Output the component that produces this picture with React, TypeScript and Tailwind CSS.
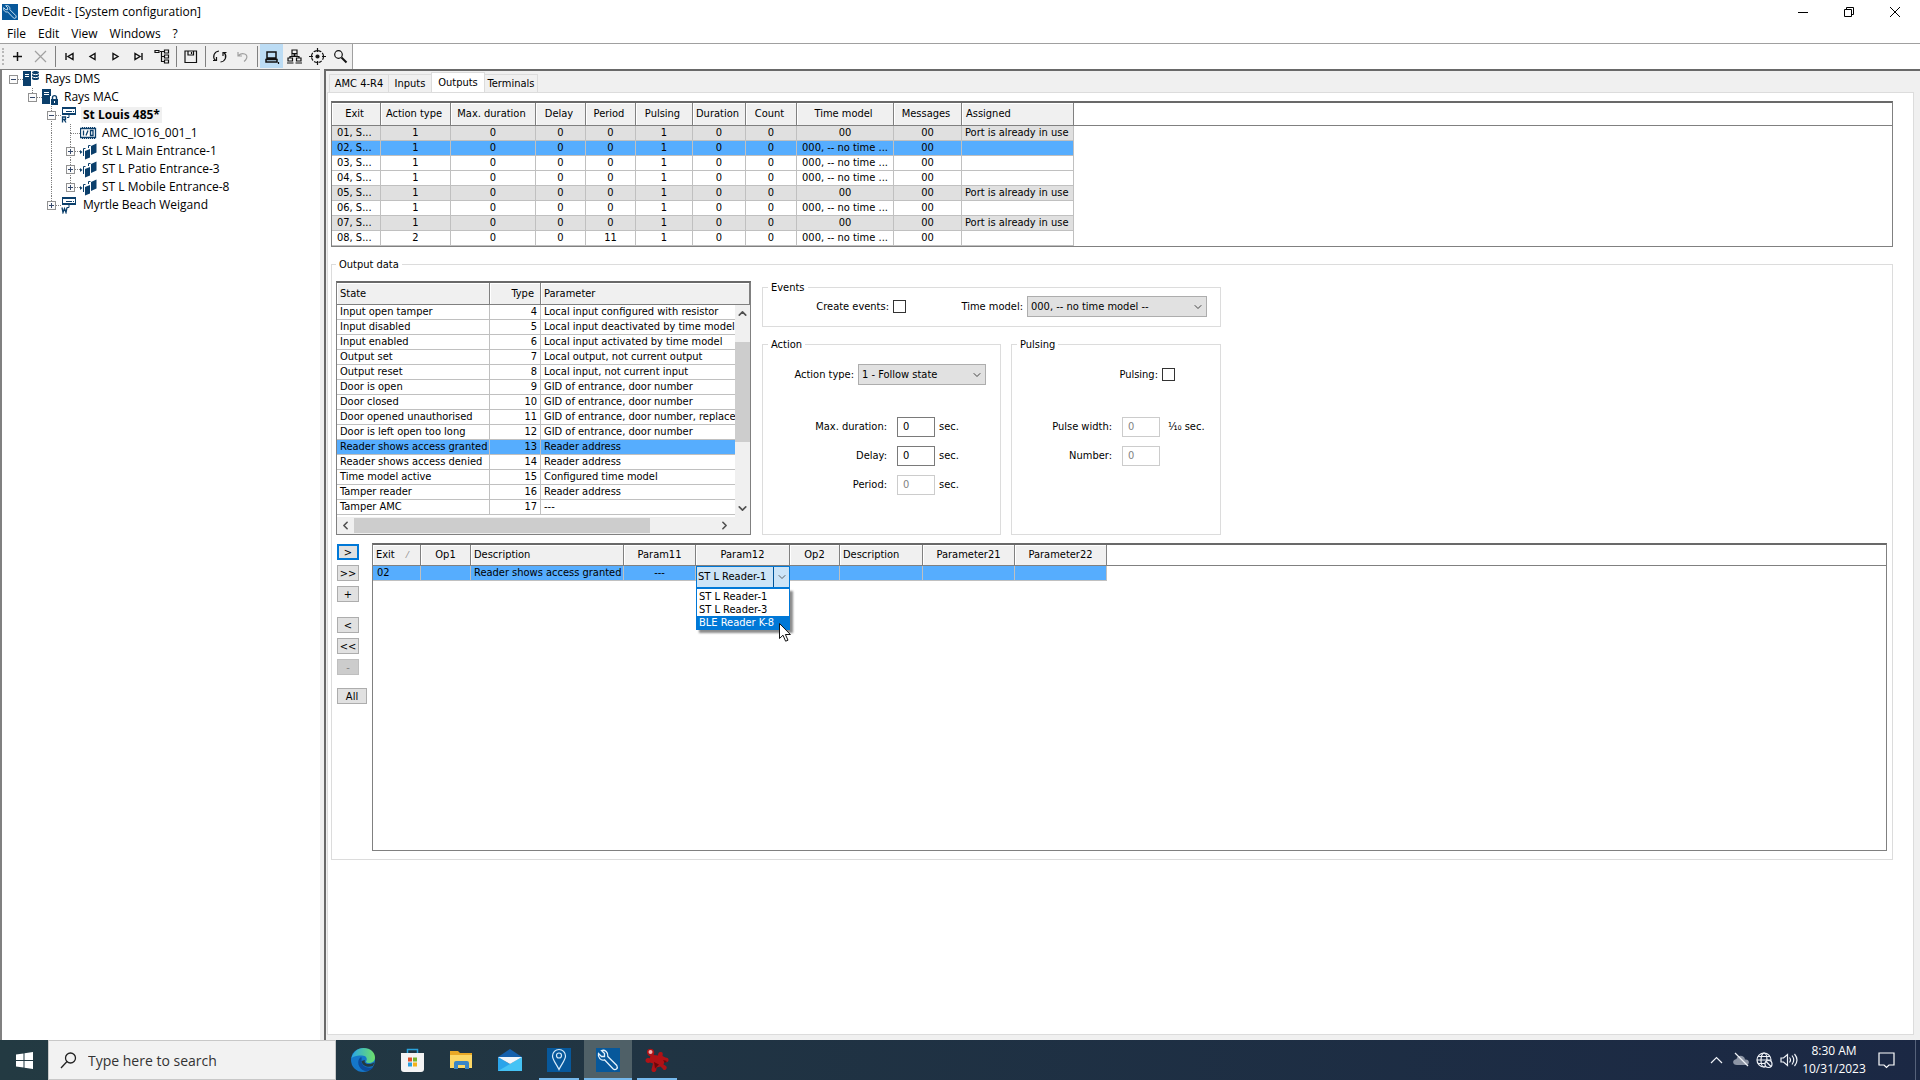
import type { ReactNode } from 'react';
import { ChevronDown, ChevronLeft, ChevronRight, ChevronUp } from 'lucide-react';

const outputRows = [
  { exit: '01, S...', action: '1', period: '0', model: '00', assigned: 'Port is already in use' },
  { exit: '02, S...', action: '1', period: '0', model: '000, -- no time ...', assigned: '', selected: true },
  { exit: '03, S...', action: '1', period: '0', model: '000, -- no time ...', assigned: '' },
  { exit: '04, S...', action: '1', period: '0', model: '000, -- no time ...', assigned: '' },
  { exit: '05, S...', action: '1', period: '0', model: '00', assigned: 'Port is already in use' },
  { exit: '06, S...', action: '1', period: '0', model: '000, -- no time ...', assigned: '' },
  { exit: '07, S...', action: '1', period: '0', model: '00', assigned: 'Port is already in use' },
  { exit: '08, S...', action: '2', period: '11', model: '000, -- no time ...', assigned: '' },
];

const outputColumns = [
  { label: 'Exit', width: 'w-[49px]' },
  { label: 'Action type', width: 'w-[70px]' },
  { label: 'Max. duration', width: 'w-[85px]' },
  { label: 'Delay', width: 'w-[50px]' },
  { label: 'Period', width: 'w-[50px]' },
  { label: 'Pulsing', width: 'w-[57px]' },
  { label: 'Duration', width: 'w-[53px]' },
  { label: 'Count', width: 'w-[51px]' },
  { label: 'Time model', width: 'w-[97px]' },
  { label: 'Messages', width: 'w-[68px]' },
  { label: 'Assigned', width: 'w-[112px]' },
];

const states = [
  ['Input open tamper', '4', 'Local input configured with resistor'],
  ['Input disabled', '5', 'Local input deactivated by time model'],
  ['Input enabled', '6', 'Local input activated by time model'],
  ['Output set', '7', 'Local output, not current output'],
  ['Output reset', '8', 'Local input, not current input'],
  ['Door is open', '9', 'GID of entrance, door number'],
  ['Door closed', '10', 'GID of entrance, door number'],
  ['Door opened unauthorised', '11', 'GID of entrance, door number, replace'],
  ['Door is left open too long', '12', 'GID of entrance, door number'],
  ['Reader shows access granted', '13', 'Reader address'],
  ['Reader shows access denied', '14', 'Reader address'],
  ['Time model active', '15', 'Configured time model'],
  ['Tamper reader', '16', 'Reader address'],
  ['Tamper AMC', '17', '---'],
];

const ruleColumns = [
  { label: 'Exit', width: 'w-[48px]' },
  { label: 'Op1', width: 'w-[50px]' },
  { label: 'Description', width: 'w-[153px]' },
  { label: 'Param11', width: 'w-[72px]' },
  { label: 'Param12', width: 'w-[94px]' },
  { label: 'Op2', width: 'w-[50px]' },
  { label: 'Description', width: 'w-[83px]' },
  { label: 'Parameter21', width: 'w-[92px]' },
  { label: 'Parameter22', width: 'w-[92px]' },
];

// connector cells: '' blank, 'v' vertical, 't' branch, 'l' last branch, '-' collapsible, '+' expandable
const tree = [
  { lines: ['-'], icon: 'dms', label: 'Rays DMS' },
  { lines: ['', 'l-'], icon: 'mac', label: 'Rays MAC' },
  { lines: ['', '', 't-'], icon: 'amcR', label: 'St Louis 485*', active: true },
  { lines: ['', '', 'v', 't'], icon: 'io', label: 'AMC_IO16_001_1' },
  { lines: ['', '', 'v', 't+'], icon: 'door', label: 'St L Main Entrance-1' },
  { lines: ['', '', 'v', 't+'], icon: 'door', label: 'ST L Patio Entrance-3' },
  { lines: ['', '', 'v', 'l+'], icon: 'door', label: 'ST L Mobile Entrance-8' },
  { lines: ['', '', 'l+'], icon: 'amcW', label: 'Myrtle Beach Weigand' },
];

const headCell =
  'border-b border-r border-[#808080] bg-[#f0f0f0] p-0 font-normal whitespace-nowrap overflow-hidden shadow-[inset_1px_1px_0_#ffffff]';
const cell = 'h-[15px] border-b border-r border-[#c0c0c0] p-0 leading-[14px] whitespace-nowrap overflow-hidden';

function TreeLine({ kind }: { kind: string }) {
  const box = kind.includes('+') || kind.includes('-');
  const up = /[vtl]/.test(kind);
  const down = /[vt]/.test(kind);
  return (
    <svg width="19" height="18" className="shrink-0" fill="none" stroke="#808080" shapeRendering="crispEdges">
      {up && <path d="M9.5 0V9" strokeDasharray="1 1" />}
      {down && <path d="M9.5 9V18" strokeDasharray="1 1" />}
      {kind && kind !== 'v' && <path d="M10 9.5H19" strokeDasharray="1 1" />}
      {box && <rect x="5.5" y="5.5" width="8" height="8" fill="#fbfbfb" stroke="#919191" />}
      {box && <path d="M7 9.5H12" stroke="#34486b" />}
      {kind.includes('+') && <path d="M9.5 7V12" stroke="#34486b" />}
    </svg>
  );
}

function TreeIcon({ name }: { name: string }) {
  return (
    <svg width="17" height="18" viewBox="0 0 17 18" className="shrink-0" fill="#0b3f6b">
      {name === 'dms' && (
        <>
          <path d="M0 1h8v15H0z" />
          <path d="M2 4.5h4M2 6.5h4" stroke="#fff" />
          <path d="M9 2.5c0-2 7-2 7 0v6c0 2-7 2-7 0z" />
          <path d="M9 3.5c1 1.5 6 1.5 7 0M9 6.5c1 1.5 6 1.5 7 0" stroke="#fff" fill="none" />
        </>
      )}
      {name === 'mac' && (
        <>
          <path d="M0 1h9v15H0z" />
          <path d="M2 4.5h5M2 6.5h5" stroke="#fff" />
          <path d="M8 8h9v9H8z" fill="#fff" />
          <path d="M9 11h7v6H9z" />
          <path d="M10.5 11V9.5c0-2.5 4-2.5 4 0V11" fill="none" stroke="#0b3f6b" strokeWidth="1.4" />
          <path d="M12.5 13v2" stroke="#fff" />
        </>
      )}
      {(name === 'amcR' || name === 'amcW') && (
        <g fill="none" stroke="#0b3f6b">
          <path d="M1.5 2h13M1.5 8h13" strokeWidth="2" />
          <path d="M1.5 1v8M14.5 1v8M5 5.5h6M12 5.5h1" />
          <path d="M8 9v2.5H6" />
          {name === 'amcR' ? (
            <path d="M1.5 16.500v-5.500h3v2.500h-3M3 13.500l2 3" strokeWidth="1.3" />
          ) : (
            <path d="M1 11.500l1 5 1.500-4 1.500 4 1-5" strokeWidth="1.3" />
          )}
        </g>
      )}
      {name === 'io' && (
        <g fill="none" stroke="#0b3f6b">
          <path d="M.5 4.500h15v9H.5z" strokeWidth="1.3" />
          <path d="M2 3.500h13M2 14.500h13" strokeDasharray="1 1" />
          <path d="M3.500 6.500v5M6 11.500l2-5M10.500 6.500h2.500v5h-2.500z" strokeWidth="1.3" />
        </g>
      )}
      {name === 'door' && (
        <>
          <path d="M0 8l2.500 2L0 12z" />
          <path d="M3.500 14V6.500h2" fill="none" stroke="#0b3f6b" />
          <path d="M5 9l5-2v8.500l-5 2z" />
          <path d="M8.500 6V3.500h2" fill="none" stroke="#0b3f6b" />
          <path d="M11 4l5.500-2.500v9L11 13z" />
        </>
      )}
    </svg>
  );
}

function ToolButton({ label, children, active, dim }: { label: string; children: ReactNode; active?: boolean; dim?: boolean }) {
  return (
    <button aria-label={label} className={`flex h-6 w-[23px] items-center justify-center ${active ? 'bg-[#bcdcf4]' : ''}`}>
      <svg width="17" height="17" viewBox="0 0 17 17" fill="none" stroke={dim ? '#a0a0a0' : '#111111'} strokeWidth="1.2">
        {children}
      </svg>
    </button>
  );
}

function ToolSeparator() {
  return (
    <div className="flex w-[6px] justify-center py-[2px]">
      <div className="w-px bg-[#808080]" />
    </div>
  );
}

function Toolbar() {
  return (
    <div className="flex h-[25px] bg-white">
      <div className="flex border-r border-[#a0a0a0] bg-[#f0f0f0]">
        <div className="my-1 ml-[2px] mr-[2px] w-[2px] border-l-2 border-dotted border-[#b8b8b8]" />
        <ToolButton label="New"><path d="M8.5 4v9M4 8.5h9" strokeWidth="1.5" /></ToolButton>
        <ToolButton label="Delete" dim><path d="M3 3l11 11M14 3L3 14" /></ToolButton>
        <ToolSeparator />
        <ToolButton label="First"><path d="M5 5v7M12 5.500v6l-5-3z" strokeWidth="1.4" /></ToolButton>
        <ToolButton label="Previous"><path d="M11 5.500v6l-5-3z" strokeWidth="1.4" /></ToolButton>
        <ToolButton label="Next"><path d="M6 5.500v6l5-3z" strokeWidth="1.4" /></ToolButton>
        <ToolButton label="Last"><path d="M12 5v7M5 5.500v6l5-3z" strokeWidth="1.4" /></ToolButton>
        <ToolButton label="Tree">
          <path d="M2 2.500h4v2H2zM11.500 2h4v3h-4zM11.500 7h4v3h-4zM11.500 12h4v3h-4zM7 3.500h4M8.500 3.500v10H11M8.500 8.500H11" />
        </ToolButton>
        <ToolSeparator />
        <ToolButton label="Save"><path d="M3 3h11.500v11.500H3zM6 3v4h5.500V3M9.500 4v2" /></ToolButton>
        <ToolSeparator />
        <ToolButton label="Refresh">
          <path d="M8 3c-5 .5-7 6-3.500 9.500M2 12.500h3.500V9M9.500 14c5-.5 7-6 3.500-9.500M15.500 4.500H12V8" />
        </ToolButton>
        <ToolButton label="Undo" dim><path d="M4 4v4h4M4.500 7.500c4-4 10-1 8 3-.5 1-1 2-2.500 3" /></ToolButton>
        <ToolSeparator />
        <ToolButton label="Devices" active>
          <path d="M4 4h9v6H4zM3 11.500h11v2.500H3z" strokeWidth="1.5" />
          <path d="M15.500 14v2" />
        </ToolButton>
        <ToolButton label="Network">
          <path d="M6 2h5v3.500H6zM8.500 5.500v3M4 10V8.500h9V10M2 10h4.500v3H2zM10.500 10H15v3h-4.500zM1 15h6.500M9.500 15H16M5 7h7" />
        </ToolButton>
        <ToolButton label="Locate">
          <circle cx="8.5" cy="8.5" r="6" strokeDasharray="3.4 1.3" />
          <path d="M8.500 0v4M8.500 13v4M0 8.500h4M13 8.500h4" />
          <circle cx="8.5" cy="8.5" r="1.5" fill="#111111" />
        </ToolButton>
        <ToolButton label="Search"><circle cx="6.5" cy="6.5" r="3.8" /><path d="M9.500 9.500l5 5" strokeWidth="2" /></ToolButton>
      </div>
    </div>
  );
}

function OutputTable() {
  return (
    <div className="border border-t-2 border-[#808080] border-t-[#696969]">
      <table className="w-full table-fixed border-separate border-spacing-0">
        <thead>
          <tr>
            {outputColumns.map((c) => (
              <th key={c.label} className={`${headCell} h-[23px] ${c.width} ${c.label === 'Assigned' ? 'pl-1 text-left' : 'pr-[3px] text-center'}`}>
                {c.label}
              </th>
            ))}
            <th className="border-b border-[#808080]" />
          </tr>
        </thead>
        <tbody>
          {outputRows.map((r) => (
            <tr key={r.exit} className={r.selected ? 'bg-[#56adfe]' : r.assigned ? 'bg-[#e0e0e0]' : 'bg-white'}>
              <td className={`${cell} pl-[5px]`}>{r.exit}</td>
              {[r.action, '0', '0', r.period, '1', '0', '0', r.model, '00'].map((v, i) => (
                <td key={i} className={`${cell} text-center`}>{v}</td>
              ))}
              <td className={`${cell} pl-[3px]`}>{r.assigned}</td>
              <td className="bg-white p-0" />
            </tr>
          ))}
        </tbody>
      </table>
    </div>
  );
}

function StateTable() {
  return (
    <div className="relative flex h-[254px] w-[415px] flex-col border border-t-2 border-[#808080] border-t-[#696969]">
      <div className="min-h-0 flex-1 overflow-hidden">
        <table className="w-full table-fixed border-separate border-spacing-0">
          <thead>
            <tr>
              <th className={`${headCell} h-[22px] w-[153px] pl-[3px] text-left`}>State</th>
              <th className={`${headCell} h-[22px] w-[51px] pr-[6px] text-right`}>Type</th>
              <th className={`${headCell} h-[22px] pl-[3px] text-left`}>Parameter</th>
            </tr>
          </thead>
          <tbody>
            {states.map(([state, type, param]) => (
              <tr key={type} className={type === '13' ? 'bg-[#56adfe]' : 'bg-white'}>
                <td className={`${cell} pl-[3px]`}>{state}</td>
                <td className={`${cell} pr-[3px] text-right`}>{type}</td>
                <td className={`${cell} pl-[3px]`}>{param}</td>
              </tr>
            ))}
          </tbody>
        </table>
      </div>
      <div className="flex h-[17px] items-center bg-[#f0f0f0]">
        <button aria-label="Scroll left" className="flex w-[17px] justify-center"><ChevronLeft size={13} strokeWidth={3} color="#505050" /></button>
        <div className="h-[15px] w-[296px] bg-[#cdcdcd]" />
        <button aria-label="Scroll right" className="ml-auto mr-[17px] flex w-[17px] justify-center"><ChevronRight size={13} strokeWidth={3} color="#505050" /></button>
      </div>
      {/* vertical scrollbar lies over the clipped rows */}
      <div className="absolute bottom-[17px] right-0 top-[22px] flex w-[15px] flex-col items-center bg-[#f0f0f0]">
        <button aria-label="Scroll up" className="flex h-[17px] items-center"><ChevronUp size={13} strokeWidth={3} color="#505050" /></button>
        <div className="mt-[20px] h-[100px] w-[15px] bg-[#cdcdcd]" />
        <button aria-label="Scroll down" className="mt-auto flex h-[17px] items-center"><ChevronDown size={13} strokeWidth={3} color="#505050" /></button>
      </div>
    </div>
  );
}

function SelectBox({ id, value, width }: { id: string; value: string; width: string }) {
  return (
    <div className={`relative ${width}`}>
      <select id={id} className="h-[21px] w-full appearance-none border border-[#adadad] bg-[#e1e1e1] pl-[3px]">
        <option>{value}</option>
      </select>
      <ChevronDown size={12} strokeWidth={2} color="#444444" className="pointer-events-none absolute right-[3px] top-[5px]" />
    </div>
  );
}

function NumberField({ id, label, unit, disabled }: { id: string; label: string; unit: ReactNode; disabled?: boolean }) {
  return (
    <div className="flex h-[29px] items-center">
      <label htmlFor={id} className="flex-1 pr-[10px] text-right">{label}</label>
      <input
        id={id}
        defaultValue="0"
        disabled={disabled}
        className={`h-[20px] w-[38px] border px-[5px] ${disabled ? 'border-[#cccccc] text-[#838383]' : 'border-[#7a7a7a]'}`}
      />
      {unit}
    </div>
  );
}

const group = 'min-w-0 border border-[#dcdcdc]';
const groupTitle = 'ml-[5px] px-[3px] leading-[13px]';

function Settings() {
  const seconds = <span className="w-[65px] pl-1">sec.</span>;
  return (
    <div className="flex w-[459px] flex-col gap-[11px]">
      <fieldset className={`${group} h-[46px]`}>
        <legend className={groupTitle}>Events</legend>
        <div className="flex items-center pr-[13px] pt-[2px]">
          <label htmlFor="create" className="w-[130px] pr-1 text-right">Create events:</label>
          <input id="create" type="checkbox" className="size-[13px] appearance-none border border-[#333333]" />
          <label htmlFor="model" className="flex-1 pr-1 text-right">Time model:</label>
          <SelectBox id="model" value="000, -- no time model --" width="w-[180px]" />
        </div>
      </fieldset>
      <div className="flex gap-[10px]">
        <fieldset className={`${group} h-[197px] w-[239px]`}>
          <legend className={groupTitle}>Action</legend>
          <div className="flex items-center pr-[14px] pt-[13px]">
            <label htmlFor="action" className="flex-1 pr-1 text-right">Action type:</label>
            <SelectBox id="action" value="1 - Follow state" width="w-[128px]" />
          </div>
          <div className="pt-[27px]">
            <NumberField id="max" label="Max. duration:" unit={seconds} />
            <NumberField id="delay" label="Delay:" unit={seconds} />
            <NumberField id="period" label="Period:" unit={seconds} disabled />
          </div>
        </fieldset>
        <fieldset className={`${group} h-[197px] flex-1`}>
          <legend className={groupTitle}>Pulsing</legend>
          <div className="flex items-center justify-end gap-1 pr-[45px] pt-[13px]">
            <label htmlFor="pulsing" className="leading-[21px]">Pulsing:</label>
            <input id="pulsing" type="checkbox" className="size-[13px] appearance-none border border-[#333333]" />
          </div>
          <div className="pt-[27px]">
            <NumberField id="pulse" label="Pulse width:" disabled unit={<span className="w-[60px] pl-2">⅒ sec.</span>} />
            <NumberField id="number" label="Number:" disabled unit={<span className="w-[60px]" />} />
          </div>
        </fieldset>
      </div>
    </div>
  );
}

function MoveButton({ label, style }: { label: string; style?: string }) {
  return (
    <button className={`flex h-4 items-center justify-center border leading-none ${style ?? 'w-[22px] border-[#adadad] bg-[#e1e1e1]'}`}>
      {label}
    </button>
  );
}

function ReaderCombo() {
  return (
    <div className="absolute left-0 top-0 z-10 w-[94px]">
      <div className="flex h-[22px] border border-[#0078d7] bg-[#cce4f7]">
        <div className="flex-1 self-center pl-[1px]">ST L Reader-1</div>
        <button aria-label="Open readers" className="flex w-[16px] items-center justify-center border-l border-[#005499]">
          <ChevronDown size={12} strokeWidth={1.5} color="#333333" />
        </button>
      </div>
      <ul role="listbox" className="border border-[#0078d7] bg-white pt-[1px] shadow-[3px_3px_2px_rgba(0,0,0,0.45)]">
        <li role="option" className="h-[13px] pl-[2px] leading-[13px]">ST L Reader-1</li>
        <li role="option" className="h-[13px] pl-[2px] leading-[13px]">ST L Reader-3</li>
        <li role="option" aria-selected="true" className="h-[13px] bg-[#0078d7] pl-[2px] leading-[13px] text-white">BLE Reader K-8</li>
      </ul>
      <svg width="13" height="20" viewBox="0 0 13 20" className="absolute left-[83px] top-[57px]">
        <path d="M.5.5v15l3.500-3.300 2.600 6 2.400-1-2.600-5.700h5z" fill="#fff" stroke="#111" />
      </svg>
    </div>
  );
}

function RuleTable() {
  return (
    <div className="min-w-0 flex-1 border border-t-2 border-[#808080] border-t-[#696969]">
      <table className="w-full table-fixed border-separate border-spacing-0">
        <thead>
          <tr>
            {ruleColumns.map((c, i) => (
              <th key={i} className={`${headCell} h-[21px] ${c.width} ${c.label === 'Description' || i === 0 ? 'pl-[3px] text-left' : 'text-center'}`}>
                {c.label}
                {i === 0 && <span className="ml-3 text-[9px] text-[#808080]">⁄</span>}
              </th>
            ))}
            <th className="border-b border-[#808080]" />
          </tr>
        </thead>
        <tbody>
          <tr className="bg-[#56adfe]">
            <td className={`${cell} pl-1`}>02</td>
            <td className={cell} />
            <td className={`${cell} pl-[3px]`}>Reader shows access granted</td>
            <td className={`${cell} text-center`}>---</td>
            <td className="relative p-0"><ReaderCombo /></td>
            <td className={cell} />
            <td className={cell} />
            <td className={cell} />
            <td className={cell} />
            <td className="bg-white" />
          </tr>
        </tbody>
      </table>
    </div>
  );
}

function Taskbar() {
  return (
    <footer className="flex h-10 shrink-0 bg-linear-to-r from-[#233a42] to-[#1b2844] font-['Open_Sans','Noto_Sans',sans-serif] text-white">
      <button aria-label="Start" className="flex w-12 items-center justify-center">
        <svg width="17" height="17" viewBox="0 0 17 17" fill="#fff"><path d="M0 2.500l7.500-1V8H0zM8.500 1.300L17 0v8H8.500zM0 9h7.500v6.500l-7.500-1zM8.500 9H17v8l-8.500-1.300z" /></svg>
      </button>
      <label className="flex w-[288px] items-center border border-[#c8c8c8] bg-[#f2f2f2]">
        <svg width="17" height="17" viewBox="0 0 17 17" fill="none" stroke="#222" strokeWidth="1.3" className="ml-[11px]">
          <circle cx="10.5" cy="6" r="5" /><path d="M7 9.500L1 16" />
        </svg>
        <input placeholder="Type here to search" className="ml-[11px] w-[200px] text-[14px] placeholder:text-[#333333]" />
      </label>
      <div className="ml-[3px] flex gap-px">
        <button aria-label="Edge" className="flex w-12 items-center justify-center">
          <svg width="24" height="24" viewBox="0 0 24 24">
            <defs>
              <linearGradient id="edgeTop" x1="0" x2="1"><stop stopColor="#2aa5e5" /><stop offset="1" stopColor="#6ee06a" /></linearGradient>
            </defs>
            <circle cx="12" cy="12" r="12" fill="#1577c9" />
            <path d="M.5 10C2 4 7 0 12.500 0 20 0 24 5 24 9.500c0 4-3 5.500-6 5.500-2 0-3.500-.7-3-1.500 2-3 0-6-4-6S3 8 .5 10z" fill="url(#edgeTop)" />
            <path d="M10 9c-5 3-3 12 4 14 4 .5 7-2 8.500-4-5 2-12-.5-12-6 0-2 .5-3.500-.5-4z" fill="#0c4c9c" />
            <path d="M14 12c-1 2 0 4 4 4 2 0 4-.5 5.500-2L22 18c-5 2-11 0-11.500-5z" fill="#233a42" />
          </svg>
        </button>
        <button aria-label="Store" className="flex w-12 items-center justify-center">
          <svg width="23" height="24" viewBox="0 0 23 24">
            <path d="M6.500 6V1.500h10V6" fill="none" stroke="#2ba3dc" strokeWidth="1.5" />
            <path d="M0 5h23v16q0 3-3 3H3q-3 0-3-3z" fill="#f4f4f4" />
            <path d="M7 9.500h4v4H7z" fill="#e0502a" /><path d="M12 9.500h4v4h-4z" fill="#76b52c" />
            <path d="M7 14.500h4v4H7z" fill="#2a9fe0" /><path d="M12 14.500h4v4h-4z" fill="#f3b21b" />
          </svg>
        </button>
        <button aria-label="Files" className="flex w-12 items-center justify-center">
          <svg width="22" height="20" viewBox="0 0 22 20">
            <path d="M0 1h8l2 2h12v15H0z" fill="#e9a826" /><path d="M0 5h22v13H0z" fill="#fcd766" />
            <path d="M4 19v-6q0-2 2-2h11q2 0 2 2v6h-4v-4H8v4z" fill="#3a86c8" />
          </svg>
        </button>
        <button aria-label="Mail" className="flex w-12 items-center justify-center">
          <svg width="24" height="22" viewBox="0 0 24 22">
            <path d="M0 8L12 0l12 8v4H0z" fill="#1560ac" />
            <path d="M0 8l12 7 12-7v14H0z" fill="#2aa4ea" /><path d="M0 22L24 8v14z" fill="#45c3f5" />
            <path d="M0 8h24l-12 7z" fill="#f2f6fb" />
          </svg>
        </button>
        <button aria-label="Map" className="flex w-12 flex-col items-center border-x-4 border-transparent pt-2">
          <svg width="24" height="24" viewBox="0 0 24 24" fill="none" stroke="#d9ecfa" strokeWidth="1.2">
            <path d="M0 0h24v24H0z" fill="#07589b" stroke="none" />
            <path d="M12 21.500C9.500 16 5.500 12 5.500 8a6.500 6.500 0 0 1 13 0c0 4-4 8-6.500 13.500z" /><circle cx="12" cy="7.5" r="2.5" />
          </svg>
          <span className="mt-auto h-[2px] w-full bg-[#76b9ed]" />
        </button>
        <button aria-label="DevEdit" className="flex w-12 flex-col items-center bg-[#4f6067] pt-2">
          <WrenchLogo size={24} />
          <span className="mt-auto h-[2px] w-full bg-[#76b9ed]" />
        </button>
        <button aria-label="Client" className="flex w-12 flex-col items-center border-x-4 border-transparent pt-2">
          <svg width="24" height="24" viewBox="0 0 24 24">
            <path d="M2 3c1-3 6-3 7 0 .5 2 0 3-.5 4l4.500.5c0-2 1-4 3-3.500 2 0 2 2 1.500 4l3 1.500c2 0 3.500 1 3 3s-2.500 2-4 1l-1 3c2 1 4 2 3 4s-3 2-4 0l-2-2-4 1c0 2 0 4.500-2.500 4.500S6 22 7 19.500l1-4-3-1c-2 1-4.500 0-4.500-2s2-3 4-2l1-2C3 8 1.500 5.500 2 3z" fill="#b01216" />
            <path d="M9 14l5 2.500-4 4zM18 12l4 1-2 2z" fill="#6e0709" />
            <circle cx="5.5" cy="4" r="2" fill="#f1b3b3" />
          </svg>
          <span className="mt-auto h-[2px] w-full bg-[#76b9ed]" />
        </button>
      </div>
      <div className="ml-auto flex items-center">
        <svg width="90" height="20" viewBox="0 0 90 20" fill="none" stroke="#f0f3f8" strokeWidth="1.2">
          <path d="M1 13l5.500-5.500L12 13" />
          <path d="M27 15c-5 0-5-5.500-.5-6 1-4.500 8-4 8.500.5 5-.5 5 5.500 1 5.500z" fill="#8d95a5" stroke="none" />
          <path d="M25 3l13 13" />
          <circle cx="54" cy="10" r="7" /><ellipse cx="54" cy="10" rx="3" ry="7" /><path d="M47 10h14M48 6.500h12M48 13.500h7" />
          <circle cx="58.5" cy="14" r="3.5" fill="#1b2844" /><path d="M56 11.500l5 5" />
          <path d="M71 8h2.500l4-3.500v11l-4-3.500H71zM79.500 7.500q2 2.500 0 5M82 5.500q3.500 4.500 0 9M84.500 4q5 6 0 12" />
        </svg>
        <div className="w-[68px] text-center text-[12px] leading-[18px]">
          <div>8:30 AM</div>
          <div>10/31/2023</div>
        </div>
        <button aria-label="Notifications" className="ml-1 mr-[15px] w-[28px] pl-[6px]">
          <svg width="18" height="18" viewBox="0 0 18 18" fill="none" stroke="#fff" strokeWidth="1.2"><path d="M1 2h15v12h-5l-2.500 2.500L6 14H1z" /></svg>
        </button>
        <div className="h-10 w-[5px] border-l border-[#56627a]" />
      </div>
    </footer>
  );
}

function WrenchLogo({ size }: { size: number }) {
  return (
    <svg width={size} height={size} viewBox="0 0 24 24" fill="none" stroke="#e4f2fc" strokeWidth="1.3">
      <path d="M0 0h24v24H0z" fill="#07589b" stroke="none" />
      <path d="M2.500 5.500l3 3h3v-3l-3-3c3.500-1 7 1.500 6.300 6l9 9q1.200 2-.3 3.500-1.800 1.300-3.500-.2l-8.500-9C5 13 1.500 9.500 2.500 5.500z" />
    </svg>
  );
}

export default function App() {
  return (
    <div className="flex h-screen flex-col overflow-hidden bg-[#f0f0f0] font-['DejaVu_Sans_Condensed','DejaVu_Sans',sans-serif] text-[11px] leading-[14px] text-black">
      <header className="bg-white font-['Open_Sans','Noto_Sans',sans-serif] text-[12px] leading-[16px]">
        <div className="flex h-6 items-center pr-[2px]">
          <div className="ml-[2px] mr-[4px]"><WrenchLogo size={16} /></div>
          <h1>DevEdit - [System configuration]</h1>
          <div className="ml-auto flex">
            <button aria-label="Minimize" className="flex h-5 w-[46px] items-center justify-center"><svg width="10" height="10" stroke="#000"><path d="M0 5.500h10" /></svg></button>
            <button aria-label="Restore" className="flex h-5 w-[46px] items-center justify-center"><svg width="10" height="10" fill="none" stroke="#000"><path d="M.5 2.500h7v7h-7zM2.500 2.500v-2h7v7h-2" /></svg></button>
            <button aria-label="Close" className="flex h-5 w-[46px] items-center justify-center"><svg width="10" height="10" stroke="#000"><path d="M0 0l10 10M10 0L0 10" /></svg></button>
          </div>
        </div>
        <nav className="flex h-[19px] items-center gap-3 pl-[7px]">
          {['File', 'Edit', 'View', 'Windows', '?'].map((m) => (
            <button key={m}>{m}</button>
          ))}
        </nav>
      </header>
      <div className="border-t border-[#a0a0a0]"><Toolbar /></div>

      <main className="flex min-h-0 flex-1">
        <aside className="w-[320px] border-l-2 border-t border-[#808080] bg-white font-['Open_Sans','Noto_Sans',sans-serif] text-[12px] leading-[16px]">
          <ul>
            {tree.map((n) => (
              <li key={n.label} className="flex h-[18px] items-center pl-[2px]">
                {n.lines.map((k, i) => <TreeLine key={i} kind={k} />)}
                <TreeIcon name={n.icon} />
                <span className={`ml-[3px] whitespace-nowrap px-[2px] ${n.active ? 'bg-[#f0f0f0] font-bold' : ''}`}>{n.label}</span>
              </li>
            ))}
          </ul>
        </aside>

        <section className="ml-1 flex min-w-0 flex-1 flex-col border-l-2 border-t-2 border-[#696969] pb-[5px] pl-[1px] pr-[6px]">
          <div role="tablist" className="flex h-[21px] items-end pl-[2px]">
            <button role="tab" className="h-[18px] w-[60px] border border-b-0 border-[#dcdcdc] pt-[1px]">AMC 4-R4</button>
            <button role="tab" className="h-[18px] w-[42px] border-t border-[#dcdcdc] pt-[1px]">Inputs</button>
            <button role="tab" aria-selected="true" className="h-[20px] w-[54px] border border-b-0 border-[#dcdcdc] bg-white">Outputs</button>
            <button role="tab" className="h-[18px] w-[53px] border border-b-0 border-l-0 border-[#dcdcdc] pt-[1px]">Terminals</button>
          </div>
          <div className="flex-1 border border-[#dcdcdc] bg-white pl-[3px] pr-[20px] pt-[8px]">
            <OutputTable />
            <fieldset className={`${group} mt-[11px] pb-[8px] pl-1 pr-[5px]`}>
              <legend className="px-[3px] leading-[13px]">Output data</legend>
              <div className="flex gap-[11px] pt-[10px]">
                <StateTable />
                <Settings />
              </div>
              <div className="mt-[8px] flex h-[308px]">
                <div className="flex w-[36px] flex-col items-start gap-[5px] pl-[1px] pt-[1px]">
                  <MoveButton label=">" style="w-[22px] border-2 border-[#0078d7] bg-[#e1e1e1]" />
                  <MoveButton label=">>" />
                  <MoveButton label="+" />
                  <div className="mt-[10px] flex flex-col gap-[5px]">
                    <MoveButton label="<" />
                    <MoveButton label="<<" />
                    <MoveButton label="-" style="w-[22px] border-[#bfbfbf] bg-[#cccccc] text-[#838383]" />
                  </div>
                  <div className="mt-[8px]"><MoveButton label="All" style="w-[30px] border-[#adadad] bg-[#e1e1e1]" /></div>
                </div>
                <RuleTable />
              </div>
            </fieldset>
          </div>
        </section>
      </main>
      <Taskbar />
    </div>
  );
}
